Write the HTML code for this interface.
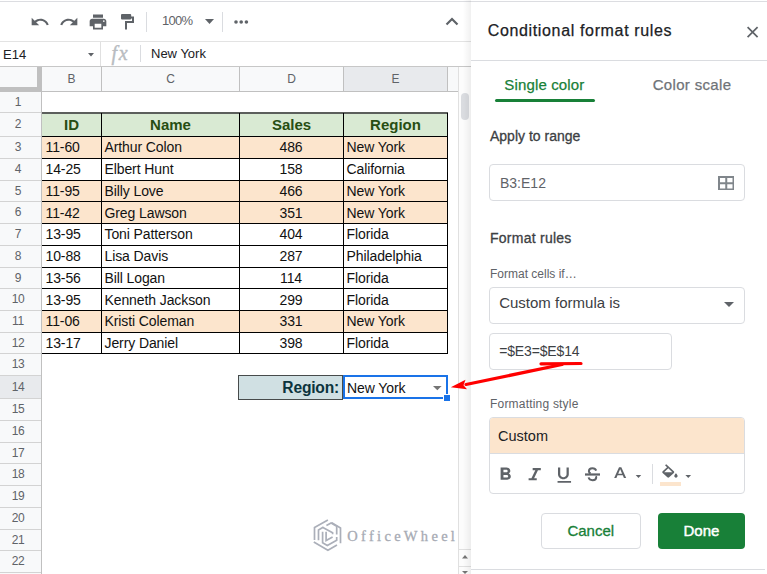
<!DOCTYPE html>
<html><head><meta charset="utf-8">
<style>
*{margin:0;padding:0;box-sizing:border-box}
html,body{width:767px;height:574px;overflow:hidden;background:#fff;font-family:"Liberation Sans",sans-serif;position:relative}
.a{position:absolute}
.t{position:absolute;white-space:nowrap;line-height:1}
</style></head><body>
<div class="a" style="left:0px;top:1px;width:767px;height:1px;background:#dcdde1;"></div>
<svg class="a" style="left:30.2px;top:12px" width="20" height="20" viewBox="0 0 24 24"><path fill="#5f6368" d="M12.5 8c-2.65 0-5.05.99-6.9 2.6L2 7v9h9l-3.62-3.62c1.39-1.16 3.16-1.88 5.12-1.88 3.54 0 6.55 2.31 7.6 5.5l2.37-.78C21.08 11.03 17.15 8 12.5 8z"/></svg>
<svg class="a" style="left:59.3px;top:12px" width="20" height="20" viewBox="0 0 24 24"><path fill="#5f6368" d="M18.4 10.6C16.550 8.99 14.15 8 11.5 8c-4.65 0-8.58 3.03-9.96 7.22L3.9 16c1.05-3.19 4.05-5.5 7.6-5.5 1.95 0 3.73.72 5.12 1.88L13 16h9V7l-3.6 3.6z"/></svg>
<svg class="a" style="left:88.3px;top:11.6px" width="20" height="20" viewBox="0 0 24 24"><path fill="#5f6368" d="M19 8H5c-1.66 0-3 1.34-3 3v6h4v4h12v-4h4v-6c0-1.66-1.34-3-3-3zm-3 11H8v-5h8v5zm3-7c-.55 0-1-.45-1-1s.45-1 1-1 1 .45 1 1-.45 1-1 1zm-1-9H6v4h12V3z"/></svg>
<svg class="a" style="left:120px;top:13px" width="16" height="17" viewBox="0 0 16 17">
  <rect x="1" y="1" width="10.2" height="5.4" rx="1" fill="#5f6368"/>
  <path d="M11 4.5h2v4.5h-7v7.5" fill="none" stroke="#5f6368" stroke-width="2"/></svg>
<div class="a" style="left:146px;top:12px;width:1px;height:20px;background:#dadce0;"></div>
<div class="t" style="left:162.00px;top:14.00px;font-size:13px;color:#5f6368;font-weight:normal;letter-spacing:-0.7px;">100%</div>
<svg class="a" style="left:205px;top:19px" width="9" height="5" viewBox="0 0 9 5"><path d="M0 0h9L4.5 5z" fill="#5f6368"/></svg>
<div class="a" style="left:222px;top:12px;width:1px;height:20px;background:#dadce0;"></div>
<svg class="a" style="left:234px;top:19px" width="16" height="6" viewBox="0 0 16 6">
<circle cx="2" cy="3" r="1.8" fill="#5f6368"/><circle cx="7.2" cy="3" r="1.8" fill="#5f6368"/><circle cx="12.4" cy="3" r="1.8" fill="#5f6368"/></svg>
<svg class="a" style="left:445px;top:16px" width="14" height="10" viewBox="0 0 14 10"><path d="M1.5 8.5L7 3l5.5 5.5" fill="none" stroke="#5f6368" stroke-width="2.2"/></svg>
<div class="a" style="left:0px;top:41px;width:471px;height:1px;background:#e3e3e3;"></div>
<div class="t" style="left:3.00px;top:48.00px;font-size:13px;color:#202124;font-weight:normal;">E14</div>
<svg class="a" style="left:87.5px;top:53.2px" width="6" height="4" viewBox="0 0 6 4"><path d="M0 0h6L3 3.5z" fill="#5f6368"/></svg>
<div class="a" style="left:100px;top:42px;width:1px;height:24px;background:#e0e0e0;"></div>
<div class="t" style="left:111.50px;top:43.00px;font-size:20px;color:#b8bcc1;font-weight:normal;font-family:'Liberation Serif',serif;font-style:italic;letter-spacing:1.8px;-webkit-text-stroke:0.4px #b8bcc1;">fx</div>
<div class="a" style="left:140px;top:45px;width:1px;height:17px;background:#dadce0;"></div>
<div class="t" style="left:151.00px;top:47.00px;font-size:13px;color:#202124;font-weight:normal;">New York</div>
<div class="a" style="left:0px;top:66px;width:471px;height:1px;background:#c7c7c7;"></div>
<div class="a" style="left:0px;top:67px;width:458px;height:24px;background:#f8f9fa;"></div>
<div class="a" style="left:344px;top:67px;width:103px;height:24px;background:#e8eaed;"></div>
<div class="a" style="left:0px;top:87px;width:41px;height:4px;background:#c0c0c0;"></div>
<div class="a" style="left:37px;top:67px;width:5px;height:24px;background:#c0c0c0;"></div>
<div class="a" style="left:0px;top:91px;width:458px;height:1px;background:#c0c0c0;"></div>
<div class="a" style="left:101px;top:67px;width:1px;height:24px;background:#c0c0c0;"></div>
<div class="a" style="left:239px;top:67px;width:1px;height:24px;background:#c0c0c0;"></div>
<div class="a" style="left:343px;top:67px;width:1px;height:24px;background:#c0c0c0;"></div>
<div class="a" style="left:447px;top:67px;width:1px;height:24px;background:#c0c0c0;"></div>
<div class="a" style="left:458px;top:67px;width:1px;height:24px;background:#c0c0c0;"></div>
<div class="t" style="left:-28.50px;width:200px;text-align:center;top:73.00px;font-size:12px;color:#5f6368;font-weight:normal;">B</div>
<div class="t" style="left:70.50px;width:200px;text-align:center;top:73.00px;font-size:12px;color:#5f6368;font-weight:normal;">C</div>
<div class="t" style="left:191.50px;width:200px;text-align:center;top:73.00px;font-size:12px;color:#5f6368;font-weight:normal;">D</div>
<div class="t" style="left:295.50px;width:200px;text-align:center;top:73.00px;font-size:12px;color:#5f6368;font-weight:normal;">E</div>
<div class="a" style="left:0px;top:92px;width:41px;height:482px;background:#f8f9fa;"></div>
<div class="a" style="left:0px;top:376px;width:41px;height:22px;background:#e8eaed;"></div>
<div class="a" style="left:41px;top:92px;width:1px;height:482px;background:#c0c0c0;"></div>
<div class="a" style="left:0px;top:112px;width:41px;height:1px;background:#d3d3d3;"></div>
<div class="t" style="left:-82.00px;width:200px;text-align:center;top:96.00px;font-size:12px;color:#5f6368;font-weight:normal;letter-spacing:-0.3px;">1</div>
<div class="a" style="left:0px;top:136px;width:41px;height:1px;background:#d3d3d3;"></div>
<div class="t" style="left:-82.00px;width:200px;text-align:center;top:118.00px;font-size:12px;color:#5f6368;font-weight:normal;letter-spacing:-0.3px;">2</div>
<div class="a" style="left:0px;top:158px;width:41px;height:1px;background:#d3d3d3;"></div>
<div class="t" style="left:-82.00px;width:200px;text-align:center;top:141.00px;font-size:12px;color:#5f6368;font-weight:normal;letter-spacing:-0.3px;">3</div>
<div class="a" style="left:0px;top:180px;width:41px;height:1px;background:#d3d3d3;"></div>
<div class="t" style="left:-82.00px;width:200px;text-align:center;top:163.00px;font-size:12px;color:#5f6368;font-weight:normal;letter-spacing:-0.3px;">4</div>
<div class="a" style="left:0px;top:201px;width:41px;height:1px;background:#d3d3d3;"></div>
<div class="t" style="left:-82.00px;width:200px;text-align:center;top:185.00px;font-size:12px;color:#5f6368;font-weight:normal;letter-spacing:-0.3px;">5</div>
<div class="a" style="left:0px;top:223px;width:41px;height:1px;background:#d3d3d3;"></div>
<div class="t" style="left:-82.00px;width:200px;text-align:center;top:206.00px;font-size:12px;color:#5f6368;font-weight:normal;letter-spacing:-0.3px;">6</div>
<div class="a" style="left:0px;top:245px;width:41px;height:1px;background:#d3d3d3;"></div>
<div class="t" style="left:-82.00px;width:200px;text-align:center;top:228.00px;font-size:12px;color:#5f6368;font-weight:normal;letter-spacing:-0.3px;">7</div>
<div class="a" style="left:0px;top:267px;width:41px;height:1px;background:#d3d3d3;"></div>
<div class="t" style="left:-82.00px;width:200px;text-align:center;top:250.00px;font-size:12px;color:#5f6368;font-weight:normal;letter-spacing:-0.3px;">8</div>
<div class="a" style="left:0px;top:288px;width:41px;height:1px;background:#d3d3d3;"></div>
<div class="t" style="left:-82.00px;width:200px;text-align:center;top:272.00px;font-size:12px;color:#5f6368;font-weight:normal;letter-spacing:-0.3px;">9</div>
<div class="a" style="left:0px;top:310px;width:41px;height:1px;background:#d3d3d3;"></div>
<div class="t" style="left:-82.00px;width:200px;text-align:center;top:293.00px;font-size:12px;color:#5f6368;font-weight:normal;letter-spacing:-0.3px;">10</div>
<div class="a" style="left:0px;top:332px;width:41px;height:1px;background:#d3d3d3;"></div>
<div class="t" style="left:-82.00px;width:200px;text-align:center;top:315.00px;font-size:12px;color:#5f6368;font-weight:normal;letter-spacing:-0.3px;">11</div>
<div class="a" style="left:0px;top:353px;width:41px;height:1px;background:#d3d3d3;"></div>
<div class="t" style="left:-82.00px;width:200px;text-align:center;top:337.00px;font-size:12px;color:#5f6368;font-weight:normal;letter-spacing:-0.3px;">12</div>
<div class="a" style="left:0px;top:375px;width:41px;height:1px;background:#d3d3d3;"></div>
<div class="t" style="left:-82.00px;width:200px;text-align:center;top:358.00px;font-size:12px;color:#5f6368;font-weight:normal;letter-spacing:-0.3px;">13</div>
<div class="a" style="left:0px;top:398px;width:41px;height:1px;background:#d3d3d3;"></div>
<div class="t" style="left:-82.00px;width:200px;text-align:center;top:381.00px;font-size:12px;color:#5f6368;font-weight:normal;letter-spacing:-0.3px;">14</div>
<div class="a" style="left:0px;top:420px;width:41px;height:1px;background:#d3d3d3;"></div>
<div class="t" style="left:-82.00px;width:200px;text-align:center;top:403.00px;font-size:12px;color:#5f6368;font-weight:normal;letter-spacing:-0.3px;">15</div>
<div class="a" style="left:0px;top:442px;width:41px;height:1px;background:#d3d3d3;"></div>
<div class="t" style="left:-82.00px;width:200px;text-align:center;top:425.00px;font-size:12px;color:#5f6368;font-weight:normal;letter-spacing:-0.3px;">16</div>
<div class="a" style="left:0px;top:463px;width:41px;height:1px;background:#d3d3d3;"></div>
<div class="t" style="left:-82.00px;width:200px;text-align:center;top:447.00px;font-size:12px;color:#5f6368;font-weight:normal;letter-spacing:-0.3px;">17</div>
<div class="a" style="left:0px;top:485px;width:41px;height:1px;background:#d3d3d3;"></div>
<div class="t" style="left:-82.00px;width:200px;text-align:center;top:468.00px;font-size:12px;color:#5f6368;font-weight:normal;letter-spacing:-0.3px;">18</div>
<div class="a" style="left:0px;top:507px;width:41px;height:1px;background:#d3d3d3;"></div>
<div class="t" style="left:-82.00px;width:200px;text-align:center;top:490.00px;font-size:12px;color:#5f6368;font-weight:normal;letter-spacing:-0.3px;">19</div>
<div class="a" style="left:0px;top:529px;width:41px;height:1px;background:#d3d3d3;"></div>
<div class="t" style="left:-82.00px;width:200px;text-align:center;top:512.00px;font-size:12px;color:#5f6368;font-weight:normal;letter-spacing:-0.3px;">20</div>
<div class="a" style="left:0px;top:550px;width:41px;height:1px;background:#d3d3d3;"></div>
<div class="t" style="left:-82.00px;width:200px;text-align:center;top:534.00px;font-size:12px;color:#5f6368;font-weight:normal;letter-spacing:-0.3px;">21</div>
<div class="a" style="left:0px;top:572px;width:41px;height:1px;background:#d3d3d3;"></div>
<div class="t" style="left:-82.00px;width:200px;text-align:center;top:555.00px;font-size:12px;color:#5f6368;font-weight:normal;letter-spacing:-0.3px;">22</div>
<div class="a" style="left:42px;top:113px;width:405px;height:23px;background:#d9ead3;"></div>
<div class="a" style="left:42px;top:137px;width:405px;height:21px;background:#fce5cd;"></div>
<div class="a" style="left:42px;top:181px;width:405px;height:20px;background:#fce5cd;"></div>
<div class="a" style="left:42px;top:202px;width:405px;height:21px;background:#fce5cd;"></div>
<div class="a" style="left:42px;top:311px;width:405px;height:21px;background:#fce5cd;"></div>
<div class="a" style="left:42px;top:112px;width:406px;height:2px;background:#5c5f5c;"></div>
<div class="a" style="left:42px;top:136px;width:406px;height:1px;background:#000;"></div>
<div class="a" style="left:42px;top:158px;width:406px;height:1px;background:#000;"></div>
<div class="a" style="left:42px;top:180px;width:406px;height:1px;background:#000;"></div>
<div class="a" style="left:42px;top:201px;width:406px;height:1px;background:#000;"></div>
<div class="a" style="left:42px;top:223px;width:406px;height:1px;background:#000;"></div>
<div class="a" style="left:42px;top:245px;width:406px;height:1px;background:#000;"></div>
<div class="a" style="left:42px;top:267px;width:406px;height:1px;background:#000;"></div>
<div class="a" style="left:42px;top:288px;width:406px;height:1px;background:#000;"></div>
<div class="a" style="left:42px;top:310px;width:406px;height:1px;background:#000;"></div>
<div class="a" style="left:42px;top:332px;width:406px;height:1px;background:#000;"></div>
<div class="a" style="left:42px;top:353px;width:406px;height:1px;background:#000;"></div>
<div class="a" style="left:101px;top:113px;width:1px;height:241px;background:#000;"></div>
<div class="a" style="left:239px;top:113px;width:1px;height:241px;background:#000;"></div>
<div class="a" style="left:343px;top:113px;width:1px;height:241px;background:#000;"></div>
<div class="a" style="left:447px;top:113px;width:1px;height:241px;background:#000;"></div>
<div class="t" style="left:-28.50px;width:200px;text-align:center;top:117.00px;font-size:15px;color:#274e13;font-weight:bold;">ID</div>
<div class="t" style="left:70.50px;width:200px;text-align:center;top:117.00px;font-size:15px;color:#274e13;font-weight:bold;">Name</div>
<div class="t" style="left:191.50px;width:200px;text-align:center;top:117.00px;font-size:15px;color:#274e13;font-weight:bold;">Sales</div>
<div class="t" style="left:295.50px;width:200px;text-align:center;top:117.00px;font-size:15px;color:#274e13;font-weight:bold;">Region</div>
<div class="t" style="left:45.50px;top:140.00px;font-size:14px;color:#111;font-weight:normal;letter-spacing:-0.1px;">11-60</div>
<div class="t" style="left:104.50px;top:140.00px;font-size:14px;color:#111;font-weight:normal;letter-spacing:-0.1px;">Arthur Colon</div>
<div class="t" style="left:191.00px;width:200px;text-align:center;top:140.00px;font-size:14px;color:#111;font-weight:normal;letter-spacing:-0.1px;">486</div>
<div class="t" style="left:346.50px;top:140.00px;font-size:14px;color:#111;font-weight:normal;letter-spacing:-0.1px;">New York</div>
<div class="t" style="left:45.50px;top:162.00px;font-size:14px;color:#111;font-weight:normal;letter-spacing:-0.1px;">14-25</div>
<div class="t" style="left:104.50px;top:162.00px;font-size:14px;color:#111;font-weight:normal;letter-spacing:-0.1px;">Elbert Hunt</div>
<div class="t" style="left:191.00px;width:200px;text-align:center;top:162.00px;font-size:14px;color:#111;font-weight:normal;letter-spacing:-0.1px;">158</div>
<div class="t" style="left:346.50px;top:162.00px;font-size:14px;color:#111;font-weight:normal;letter-spacing:-0.1px;">California</div>
<div class="t" style="left:45.50px;top:184.00px;font-size:14px;color:#111;font-weight:normal;letter-spacing:-0.1px;">11-95</div>
<div class="t" style="left:104.50px;top:184.00px;font-size:14px;color:#111;font-weight:normal;letter-spacing:-0.1px;">Billy Love</div>
<div class="t" style="left:191.00px;width:200px;text-align:center;top:184.00px;font-size:14px;color:#111;font-weight:normal;letter-spacing:-0.1px;">466</div>
<div class="t" style="left:346.50px;top:184.00px;font-size:14px;color:#111;font-weight:normal;letter-spacing:-0.1px;">New York</div>
<div class="t" style="left:45.50px;top:206.00px;font-size:14px;color:#111;font-weight:normal;letter-spacing:-0.1px;">11-42</div>
<div class="t" style="left:104.50px;top:206.00px;font-size:14px;color:#111;font-weight:normal;letter-spacing:-0.1px;">Greg Lawson</div>
<div class="t" style="left:191.00px;width:200px;text-align:center;top:206.00px;font-size:14px;color:#111;font-weight:normal;letter-spacing:-0.1px;">351</div>
<div class="t" style="left:346.50px;top:206.00px;font-size:14px;color:#111;font-weight:normal;letter-spacing:-0.1px;">New York</div>
<div class="t" style="left:45.50px;top:227.00px;font-size:14px;color:#111;font-weight:normal;letter-spacing:-0.1px;">13-95</div>
<div class="t" style="left:104.50px;top:227.00px;font-size:14px;color:#111;font-weight:normal;letter-spacing:-0.1px;">Toni Patterson</div>
<div class="t" style="left:191.00px;width:200px;text-align:center;top:227.00px;font-size:14px;color:#111;font-weight:normal;letter-spacing:-0.1px;">404</div>
<div class="t" style="left:346.50px;top:227.00px;font-size:14px;color:#111;font-weight:normal;letter-spacing:-0.1px;">Florida</div>
<div class="t" style="left:45.50px;top:249.00px;font-size:14px;color:#111;font-weight:normal;letter-spacing:-0.1px;">10-88</div>
<div class="t" style="left:104.50px;top:249.00px;font-size:14px;color:#111;font-weight:normal;letter-spacing:-0.1px;">Lisa Davis</div>
<div class="t" style="left:191.00px;width:200px;text-align:center;top:249.00px;font-size:14px;color:#111;font-weight:normal;letter-spacing:-0.1px;">287</div>
<div class="t" style="left:346.50px;top:249.00px;font-size:14px;color:#111;font-weight:normal;letter-spacing:-0.1px;">Philadelphia</div>
<div class="t" style="left:45.50px;top:271.00px;font-size:14px;color:#111;font-weight:normal;letter-spacing:-0.1px;">13-56</div>
<div class="t" style="left:104.50px;top:271.00px;font-size:14px;color:#111;font-weight:normal;letter-spacing:-0.1px;">Bill Logan</div>
<div class="t" style="left:191.00px;width:200px;text-align:center;top:271.00px;font-size:14px;color:#111;font-weight:normal;letter-spacing:-0.1px;">114</div>
<div class="t" style="left:346.50px;top:271.00px;font-size:14px;color:#111;font-weight:normal;letter-spacing:-0.1px;">Florida</div>
<div class="t" style="left:45.50px;top:293.00px;font-size:14px;color:#111;font-weight:normal;letter-spacing:-0.1px;">13-95</div>
<div class="t" style="left:104.50px;top:293.00px;font-size:14px;color:#111;font-weight:normal;letter-spacing:-0.1px;">Kenneth Jackson</div>
<div class="t" style="left:191.00px;width:200px;text-align:center;top:293.00px;font-size:14px;color:#111;font-weight:normal;letter-spacing:-0.1px;">299</div>
<div class="t" style="left:346.50px;top:293.00px;font-size:14px;color:#111;font-weight:normal;letter-spacing:-0.1px;">Florida</div>
<div class="t" style="left:45.50px;top:314.00px;font-size:14px;color:#111;font-weight:normal;letter-spacing:-0.1px;">11-06</div>
<div class="t" style="left:104.50px;top:314.00px;font-size:14px;color:#111;font-weight:normal;letter-spacing:-0.1px;">Kristi Coleman</div>
<div class="t" style="left:191.00px;width:200px;text-align:center;top:314.00px;font-size:14px;color:#111;font-weight:normal;letter-spacing:-0.1px;">331</div>
<div class="t" style="left:346.50px;top:314.00px;font-size:14px;color:#111;font-weight:normal;letter-spacing:-0.1px;">New York</div>
<div class="t" style="left:45.50px;top:336.00px;font-size:14px;color:#111;font-weight:normal;letter-spacing:-0.1px;">13-17</div>
<div class="t" style="left:104.50px;top:336.00px;font-size:14px;color:#111;font-weight:normal;letter-spacing:-0.1px;">Jerry Daniel</div>
<div class="t" style="left:191.00px;width:200px;text-align:center;top:336.00px;font-size:14px;color:#111;font-weight:normal;letter-spacing:-0.1px;">398</div>
<div class="t" style="left:346.50px;top:336.00px;font-size:14px;color:#111;font-weight:normal;letter-spacing:-0.1px;">Florida</div>
<div class="a" style="left:238.2px;top:374.8px;width:105.3px;height:24.9px;border:1.6px solid #474b4b;background:#d0e0e3"></div>
<div class="t" style="left:39.00px;width:300px;text-align:right;top:379.79px;font-size:15.6px;color:#0c343d;font-weight:bold;letter-spacing:-0.2px;">Region:</div>
<div class="t" style="left:347.00px;top:381.00px;font-size:14px;color:#111;font-weight:normal;letter-spacing:-0.1px;">New York</div>
<svg class="a" style="left:432.5px;top:386px" width="9" height="5" viewBox="0 0 9 5"><path d="M0 0h8.6L4.3 4.3z" fill="#757575"/></svg>
<div class="a" style="left:343px;top:375px;width:105px;height:24px;border:2px solid #1a73e8"></div>
<div class="a" style="left:443px;top:394px;width:8px;height:8px;background:#1a73e8;border:1px solid #fff;"></div>
<div class="a" style="left:459px;top:67px;width:12px;height:507px;background:#fcfcfc;"></div>
<div class="a" style="left:458px;top:67px;width:1px;height:507px;background:#e0e0e0;"></div>
<div class="a" style="left:461px;top:93px;width:8px;height:27px;border-radius:4px;background:#dadce0"></div>
<div class="a" style="left:459px;top:549px;width:12px;height:1px;background:#e0e0e0;"></div>
<div class="a" style="left:459px;top:566px;width:12px;height:1px;background:#e0e0e0;"></div>
<svg class="a" style="left:462px;top:555px" width="6" height="4" viewBox="0 0 6 4"><path d="M0 3.5h6L3 0z" fill="#757575"/></svg>
<svg class="a" style="left:462px;top:571px" width="6" height="3" viewBox="0 0 6 3"><path d="M0 0h6L3 3z" fill="#757575"/></svg>
<div class="a" style="left:463px;top:0;width:8px;height:574px;background:linear-gradient(to right,rgba(0,0,0,0),rgba(0,0,0,0.06))"></div>
<div class="a" style="left:471px;top:2px;width:296px;height:572px;background:#fff;"></div>
<div class="a" style="left:471px;top:1px;width:296px;height:1px;background:#dcdde1;"></div>
<div class="t" style="left:487.70px;top:23.00px;font-size:16px;color:#202124;font-weight:normal;letter-spacing:0.65px;-webkit-text-stroke:0.25px #202124;">Conditional format rules</div>
<svg class="a" style="left:0;top:0" width="767" height="60"><path d="M747.6 27.2L757.6 37.2M757.6 27.2L747.6 37.2" stroke="#5f6368" stroke-width="1.7"/></svg>
<div class="a" style="left:471px;top:60px;width:296px;height:1px;background:#dadce0;"></div>
<div class="t" style="left:504.30px;top:77.00px;font-size:15px;color:#188038;font-weight:normal;letter-spacing:0.15px;-webkit-text-stroke:0.25px #188038;">Single color</div>
<div class="t" style="left:652.70px;top:77.00px;font-size:15px;color:#6f7378;font-weight:normal;letter-spacing:0.33px;-webkit-text-stroke:0.25px #6f7378;">Color scale</div>
<div class="a" style="left:495px;top:99px;width:100px;height:3px;border-radius:2px;background:#188038"></div>
<div class="t" style="left:490.00px;top:129.00px;font-size:14px;color:#3c4043;font-weight:normal;-webkit-text-stroke:0.3px #3c4043;">Apply to range</div>
<div class="a" style="left:489px;top:164px;width:256px;height:37px;border:1px solid #dadce0;border-radius:4px"></div>
<div class="t" style="left:500.00px;top:176.00px;font-size:14px;color:#5f6368;font-weight:normal;">B3:E12</div>
<svg class="a" style="left:717.5px;top:175.5px" width="16.5" height="14.5" viewBox="0 0 16.5 14.5"><path d="M1 1h14.5v12.5H1zM8.25 1v12.5M1 7.25h14.5" fill="none" stroke="#80868b" stroke-width="2"/></svg>
<div class="t" style="left:490.00px;top:231.00px;font-size:14px;color:#3c4043;font-weight:normal;letter-spacing:0.25px;-webkit-text-stroke:0.3px #3c4043;">Format rules</div>
<div class="t" style="left:490.00px;top:268.00px;font-size:12px;color:#5f6368;font-weight:normal;">Format cells if…</div>
<div class="a" style="left:489px;top:287px;width:256px;height:37px;border:1px solid #dadce0;border-radius:4px"></div>
<div class="t" style="left:499.20px;top:295.00px;font-size:15px;color:#3c4043;font-weight:normal;">Custom formula is</div>
<svg class="a" style="left:723.5px;top:301.5px" width="10" height="5" viewBox="0 0 10 5"><path d="M0 0h10L5 5z" fill="#5f6368"/></svg>
<div class="a" style="left:489px;top:333px;width:183px;height:37px;border:1px solid #dadce0;border-radius:4px"></div>
<div class="t" style="left:499.20px;top:344.00px;font-size:14px;color:#3c4043;font-weight:normal;letter-spacing:-0.15px;">=$E3=$E$14</div>
<div class="t" style="left:490.00px;top:398.00px;font-size:12px;color:#5f6368;font-weight:normal;letter-spacing:0.2px;">Formatting style</div>
<div class="a" style="left:489px;top:417px;width:256px;height:77px;border:1px solid #dadce0;border-radius:4px;overflow:hidden"><div style="position:absolute;left:0;top:0;right:0;height:36px;background:#fce5cd;border-bottom:1px solid #dadce0"></div></div>
<div class="t" style="left:498.00px;top:429.00px;font-size:14.5px;color:#202124;font-weight:normal;">Custom</div>
<svg class="a" style="left:0;top:0" width="767" height="574"><g fill="#5f6368"><path transform="translate(493.96 464.1) scale(0.949 0.871)" d="M15.6 10.79c.97-.67 1.65-1.77 1.65-2.79 0-2.26-1.75-4-4-4H7v14h7.04c2.09 0 3.71-1.7 3.71-3.79 0-1.52-.86-2.82-2.15-3.42zM10 6.5h3c.83 0 1.5.67 1.5 1.5s-.67 1.5-1.5 1.5h-3v-3zm3.5 9H10v-3h3.5c.83 0 1.5.67 1.5 1.5s-.67 1.5-1.5 1.5z"/><path transform="translate(522.5 464.6) scale(1.017 0.871)" d="M10 4v2.4h2.6l-3.8 9.2H6V18h8v-2.4h-2.6l3.8-9.2H18V4z"/><path transform="translate(552.6 465.1) scale(0.9 0.836)" d="M12 17c3.31 0 6-2.69 6-6V3h-2.5v8c0 1.93-1.57 3.5-3.5 3.5S8.5 12.93 8.5 11V3H6v8c0 3.31 2.69 6 6 6zm-6.5 2v2h15v-2z"/><rect x="585" y="473.4" width="15" height="2.2"/><path transform="translate(609.1 464.9) scale(0.922 0.771)" d="M5.49 17h2.42l1.27-3.58h5.65L16.09 17h2.42L13.25 3h-2.5L5.49 17zm4.42-5.61l2.03-5.79h.12l2.03 5.79H9.91z"/><path d="M635.7 475h5.5l-2.75 3z"/><path d="M685.4 475h5.7l-2.85 3z"/><path transform="translate(659.7 464.2) scale(0.856 0.794)" d="M16.56 8.94L7.62 0 6.21 1.41l2.38 2.38-5.15 5.15c-.59.59-.59 1.54 0 2.12l5.5 5.5c.29.29.68.44 1.06.44s.77-.15 1.06-.44l5.5-5.5c.59-.58.59-1.53 0-2.12zM5.21 10L10 5.21 14.79 10H5.21zM19 11.5s-2 2.17-2 3.5c0 1.1.9 2 2 2s2-.9 2-2c0-1.33-2-3.5-2-3.5z"/></g><path d="M596.2 470.6C595.6 468.9 593.9 468.3 592.4 468.3C590.3 468.3 588.9 469.6 588.9 471.2C588.9 472.3 589.5 473 590.6 473.5M595.9 476.3C596.1 476.7 596.2 477.1 596.2 477.5C596.2 479.3 594.6 480.2 592.6 480.2C590.7 480.2 589 479.3 588.6 477.4" fill="none" stroke="#5f6368" stroke-width="2"/></svg>
<div class="a" style="left:651.5px;top:463.5px;width:1px;height:20px;background:#dadce0;"></div>
<div class="a" style="left:659.7px;top:482px;width:21.3px;height:3.8px;background:#fce5cd;"></div>
<div class="a" style="left:541px;top:513px;width:100px;height:36px;border:1px solid #dadce0;border-radius:4px"></div>
<div class="t" style="left:567.40px;top:523.00px;font-size:15px;color:#188038;font-weight:normal;-webkit-text-stroke:0.3px #188038;">Cancel</div>
<div class="a" style="left:658px;top:513px;width:87px;height:36px;border-radius:4px;background:#188038"></div>
<div class="t" style="left:683.50px;top:523.00px;font-size:15px;color:#fff;font-weight:normal;-webkit-text-stroke:0.45px #fff;">Done</div>
<div class="a" style="left:471px;top:569px;width:294px;height:1px;background:#dadce0;"></div>
<div class="t" style="left:347.30px;top:529.00px;font-size:14.5px;color:#a7abb4;font-weight:normal;font-family:'Liberation Serif',serif;letter-spacing:3.3px;-webkit-text-stroke:0.3px #a7abb4;">OfficeWheel</div>
<svg class="a" style="left:0;top:0" width="767" height="574"><g fill="none" stroke="#abafb9" stroke-width="1.7" stroke-linejoin="miter"><path d="M327.9 520.1L314.5 527.4V539.9"/><path d="M313.8 542.1L327.9 550.2L337 544.9"/><path d="M331.7 522.6L340.5 528V543.3"/><path d="M326.4 525.5L331.1 523L336.7 526.3V534.6"/><path d="M323.5 527L318.5 530V540.2"/><path d="M322.9 527.4L332.6 532.7V534.3"/><path d="M322.6 531.7V542.7L327.3 545.5L336.7 540.2V537"/><path d="M326.1 531.7V540.5L332.6 537"/></g></svg>
<svg class="a" style="left:0;top:0" width="767" height="574" viewBox="0 0 767 574"><path d="M541 363.8L581 363.5" stroke="#f00" stroke-width="3.2" stroke-linecap="round" fill="none"/><path d="M562 364.5L466 384.5" stroke="#f00" stroke-width="3.2" stroke-linecap="round" fill="none"/><path d="M450.8 387.3L465.5 379.8L463.5 385.2L467 389.3z" fill="#f00"/></svg>
</body></html>
